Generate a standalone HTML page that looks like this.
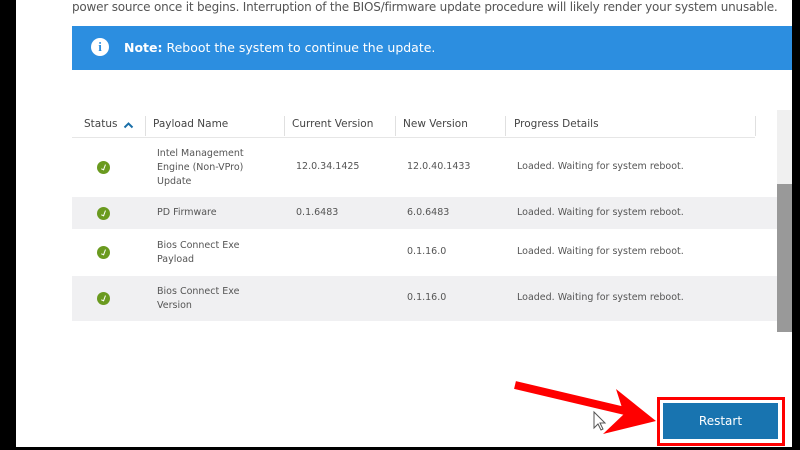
<!DOCTYPE html>
<html><head><style>
body{margin:0;width:800px;height:450px;background:#000;position:relative;overflow:hidden;font-family:"DejaVu Sans","Liberation Sans",sans-serif;}
.page{position:absolute;left:16px;top:0;width:776px;height:447px;background:#fff;}
.a{position:absolute;white-space:nowrap;}
.hd{font-size:10.5px;color:#444;}
.c{font-size:9.5px;color:#555;}
.ic{position:absolute;left:97px;width:13px;height:13px;border-radius:50%;background:#6a9a1f;}
.ic:after{content:"";position:absolute;left:5px;top:3px;width:2px;height:5px;border-right:1.5px solid #fff;border-bottom:1.5px solid #fff;transform:rotate(20deg);}
</style></head><body>
<div class="page"></div>
<div class="a" style="left:72px;top:0;font-size:12px;color:#555;letter-spacing:-0.2px;">power source once it begins. Interruption of the BIOS/firmware update procedure will likely render your system unusable.</div>
<div class="a" style="left:72px;top:26px;width:720px;height:44px;background:#2c8ee0;"></div>
<div class="a" style="left:91px;top:38px;width:18px;height:18px;border-radius:50%;background:#fff;color:#2c8ee0;font:bold 13px 'Liberation Serif',serif;text-align:center;line-height:18px;">i</div>
<div class="a" style="left:124px;top:40px;font-size:12.5px;color:#fff;"><b>Note:</b> Reboot the system to continue the update.</div>
<div class="a" style="left:777px;top:110px;width:15px;height:222px;background:#f0f0f0;"></div>
<div class="a" style="left:777px;top:184px;width:15px;height:148px;background:#999;"></div>
<div class="a" style="left:72px;top:137px;width:683px;height:1px;background:#e6e6e6;"></div>
<div class="a" style="left:145px;top:116px;width:1px;height:20px;background:#e0e0e0"></div>
<div class="a" style="left:284px;top:116px;width:1px;height:20px;background:#e0e0e0"></div>
<div class="a" style="left:395px;top:116px;width:1px;height:20px;background:#e0e0e0"></div>
<div class="a" style="left:505px;top:116px;width:1px;height:20px;background:#e0e0e0"></div>
<div class="a" style="left:755px;top:116px;width:1px;height:20px;background:#e0e0e0"></div>
<div class="a hd" style="left:84px;top:118px;">Status</div>
<svg class="a" style="left:123px;top:121px" width="11" height="8"><path d="M1.5 6.5 L5.5 2.5 L9.5 6.5" fill="none" stroke="#1a6fa8" stroke-width="2"/></svg>
<div class="a hd" style="left:153px;top:118px;">Payload Name</div>
<div class="a hd" style="left:292px;top:118px;">Current Version</div>
<div class="a hd" style="left:403px;top:118px;">New Version</div>
<div class="a hd" style="left:514px;top:118px;">Progress Details</div>
<div class="a" style="left:72px;top:197px;width:705px;height:32px;background:#f0f0f2;"></div>
<div class="a" style="left:72px;top:276px;width:705px;height:45px;background:#f0f0f2;"></div>
<div class="ic" style="top:161px"></div>
<div class="ic" style="top:207px"></div>
<div class="ic" style="top:246px"></div>
<div class="ic" style="top:292px"></div>
<div class="a c" style="left:157px;top:147px;line-height:14px;">Intel Management<br>Engine (Non-VPro)<br>Update</div>
<div class="a c" style="left:296px;top:161px;">12.0.34.1425</div>
<div class="a c" style="left:407px;top:161px;">12.0.40.1433</div>
<div class="a c" style="left:517px;top:161px;">Loaded. Waiting for system reboot.</div>
<div class="a c" style="left:157px;top:207px;">PD Firmware</div>
<div class="a c" style="left:296px;top:207px;">0.1.6483</div>
<div class="a c" style="left:407px;top:207px;">6.0.6483</div>
<div class="a c" style="left:517px;top:207px;">Loaded. Waiting for system reboot.</div>
<div class="a c" style="left:157px;top:239px;line-height:14px;">Bios Connect Exe<br>Payload</div>
<div class="a c" style="left:407px;top:246px;">0.1.16.0</div>
<div class="a c" style="left:517px;top:246px;">Loaded. Waiting for system reboot.</div>
<div class="a c" style="left:157px;top:285px;line-height:14px;">Bios Connect Exe<br>Version</div>
<div class="a c" style="left:407px;top:292px;">0.1.16.0</div>
<div class="a c" style="left:517px;top:292px;">Loaded. Waiting for system reboot.</div>
<div class="a" style="left:657px;top:397px;width:122px;height:43px;border:3px solid #f00;"></div>
<div class="a" style="left:663px;top:403px;width:115px;height:36px;background:#1874b0;color:#fff;font-size:12px;text-align:center;line-height:36px;">Restart</div>
<svg class="a" style="left:0;top:0" width="800" height="450"><path d="M594 412 L594 428 L598 424 L601 430 L603 429 L600 423 L605 423 Z" fill="#fff" stroke="#555" stroke-width="1"/>
<line x1="515" y1="385" x2="625" y2="411" stroke="#f00" stroke-width="8"/>
<path d="M616 389 L656 421 L603 434 L624 414 Z" fill="#f00"/></svg>
</body></html>
